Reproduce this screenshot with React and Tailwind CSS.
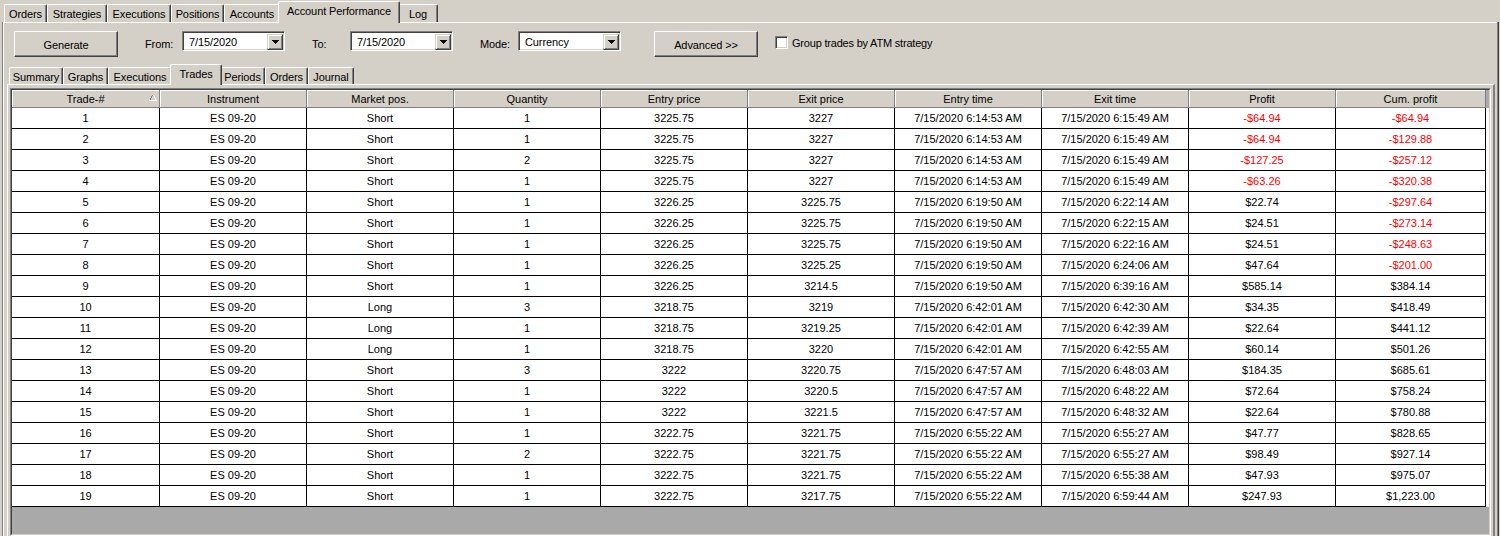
import React from "react";

const rows = [
  [1, "Short", 1, "3225.75", "3227", "7/15/2020 6:14:53 AM", "7/15/2020 6:15:49 AM", "-$64.94", "-$64.94"],
  [2, "Short", 1, "3225.75", "3227", "7/15/2020 6:14:53 AM", "7/15/2020 6:15:49 AM", "-$64.94", "-$129.88"],
  [3, "Short", 2, "3225.75", "3227", "7/15/2020 6:14:53 AM", "7/15/2020 6:15:49 AM", "-$127.25", "-$257.12"],
  [4, "Short", 1, "3225.75", "3227", "7/15/2020 6:14:53 AM", "7/15/2020 6:15:49 AM", "-$63.26", "-$320.38"],
  [5, "Short", 1, "3226.25", "3225.75", "7/15/2020 6:19:50 AM", "7/15/2020 6:22:14 AM", "$22.74", "-$297.64"],
  [6, "Short", 1, "3226.25", "3225.75", "7/15/2020 6:19:50 AM", "7/15/2020 6:22:15 AM", "$24.51", "-$273.14"],
  [7, "Short", 1, "3226.25", "3225.75", "7/15/2020 6:19:50 AM", "7/15/2020 6:22:16 AM", "$24.51", "-$248.63"],
  [8, "Short", 1, "3226.25", "3225.25", "7/15/2020 6:19:50 AM", "7/15/2020 6:24:06 AM", "$47.64", "-$201.00"],
  [9, "Short", 1, "3226.25", "3214.5", "7/15/2020 6:19:50 AM", "7/15/2020 6:39:16 AM", "$585.14", "$384.14"],
  [10, "Long", 3, "3218.75", "3219", "7/15/2020 6:42:01 AM", "7/15/2020 6:42:30 AM", "$34.35", "$418.49"],
  [11, "Long", 1, "3218.75", "3219.25", "7/15/2020 6:42:01 AM", "7/15/2020 6:42:39 AM", "$22.64", "$441.12"],
  [12, "Long", 1, "3218.75", "3220", "7/15/2020 6:42:01 AM", "7/15/2020 6:42:55 AM", "$60.14", "$501.26"],
  [13, "Short", 3, "3222", "3220.75", "7/15/2020 6:47:57 AM", "7/15/2020 6:48:03 AM", "$184.35", "$685.61"],
  [14, "Short", 1, "3222", "3220.5", "7/15/2020 6:47:57 AM", "7/15/2020 6:48:22 AM", "$72.64", "$758.24"],
  [15, "Short", 1, "3222", "3221.5", "7/15/2020 6:47:57 AM", "7/15/2020 6:48:32 AM", "$22.64", "$780.88"],
  [16, "Short", 1, "3222.75", "3221.75", "7/15/2020 6:55:22 AM", "7/15/2020 6:55:27 AM", "$47.77", "$828.65"],
  [17, "Short", 2, "3222.75", "3221.75", "7/15/2020 6:55:22 AM", "7/15/2020 6:55:27 AM", "$98.49", "$927.14"],
  [18, "Short", 1, "3222.75", "3221.75", "7/15/2020 6:55:22 AM", "7/15/2020 6:55:38 AM", "$47.93", "$975.07"],
  [19, "Short", 1, "3222.75", "3217.75", "7/15/2020 6:55:22 AM", "7/15/2020 6:59:44 AM", "$247.93", "$1,223.00"],
];

const headers = [
  "Trade-#",
  "Instrument",
  "Market pos.",
  "Quantity",
  "Entry price",
  "Exit price",
  "Entry time",
  "Exit time",
  "Profit",
  "Cum. profit",
];

const topTabs = [
  { label: "Orders", w: "w-[43px]" },
  { label: "Strategies", w: "w-[60px]" },
  { label: "Executions", w: "w-[64px]" },
  { label: "Positions", w: "w-[53px]" },
  { label: "Accounts", w: "w-[56px]" },
  { label: "Account Performance", w: "w-[122px]", sel: true },
  { label: "Log", w: "w-[40px]" },
];

const subTabs = [
  { label: "Summary", w: "w-[54px]" },
  { label: "Graphs", w: "w-[45px]" },
  { label: "Executions", w: "w-[64px]" },
  { label: "Trades", w: "w-[52px]", sel: true },
  { label: "Periods", w: "w-[45px]" },
  { label: "Orders", w: "w-[43px]" },
  { label: "Journal", w: "w-[46px]" },
];

function Tab({ label, w, sel, small }) {
  if (sel) {
    return (
      <div
        className={`${w} ${small ? "h-[21px]" : "h-[22px]"} -mx-[2px] -mb-px relative z-10 bg-[#d4d0c8] border-l border-t border-r border-l-white border-t-white border-r-[#404040] rounded-tl-[2px] rounded-tr-[2px] shadow-[inset_-1px_0_0_#808080] flex justify-center pt-[3px] leading-[13px] whitespace-nowrap tracking-[-0.1px]`}
      >
        {label}
      </div>
    );
  }
  return (
    <div
      className={`${w} ${small ? "h-[17px]" : "h-[18px]"} bg-[#d4d0c8] border-l border-t border-r border-l-white border-t-white border-r-[#404040] rounded-tl-[2px] rounded-tr-[2px] shadow-[inset_-1px_0_0_#808080] flex justify-center pt-[3px] leading-[13px] whitespace-nowrap tracking-[-0.1px]`}
    >
      {label}
    </div>
  );
}

function Button({ children }) {
  return (
    <div className="w-[104px] h-[26px] shrink-0 bg-[#d4d0c8] border border-t-white border-l-white border-r-[#404040] border-b-[#404040] shadow-[inset_-1px_-1px_0_#808080] flex items-center justify-center pt-[3px]">
      {children}
    </div>
  );
}

function Arrow() {
  return (
    <svg width="7" height="4" viewBox="0 0 7 4" shapeRendering="crispEdges">
      <rect x="0" y="0" width="7" height="1" fill="#000" />
      <rect x="1" y="1" width="5" height="1" fill="#000" />
      <rect x="2" y="2" width="3" height="1" fill="#000" />
      <rect x="3" y="3" width="1" height="1" fill="#000" />
    </svg>
  );
}

function Combo({ value }) {
  return (
    <div className="w-[103px] h-[20px] shrink-0 bg-white border border-t-[#808080] border-l-[#808080] border-r-white border-b-white shadow-[inset_1px_1px_0_#404040,inset_-1px_-1px_0_#d4d0c8] p-px flex items-stretch">
      <div className="flex-1 pl-[4px] pt-[2px] leading-[13px] ml-px mt-px">{value}</div>
      <div className="w-[16px] h-[16px] mt-px bg-[#d4d0c8] border border-t-[#d4d0c8] border-l-[#d4d0c8] border-r-[#404040] border-b-[#404040] shadow-[inset_1px_1px_0_#fff,inset_-1px_-1px_0_#808080] flex items-center justify-center">
        <Arrow />
      </div>
    </div>
  );
}

function Label({ children, w }) {
  return <div className={`${w} shrink-0 h-[20px] mt-[3px] leading-[20px] whitespace-nowrap`}>{children}</div>;
}

function SortGlyph() {
  return (
    <svg width="8" height="6" viewBox="0 0 8 6" shapeRendering="crispEdges" className="absolute right-[2px] top-[5px]">
      <rect x="3" y="0" width="1" height="1" fill="#808080" />
      <rect x="4" y="0" width="1" height="1" fill="#ffffff" />
      <rect x="2" y="1" width="1" height="2" fill="#808080" />
      <rect x="5" y="1" width="1" height="2" fill="#ffffff" />
      <rect x="1" y="3" width="1" height="2" fill="#808080" />
      <rect x="6" y="3" width="1" height="2" fill="#ffffff" />
      <rect x="0" y="5" width="8" height="1" fill="#ffffff" />
    </svg>
  );
}

const gridCols = "grid grid-cols-[148px_repeat(8,147px)_150px]";

export default function App() {
  return (
    <div className="w-[1500px] h-[536px] overflow-hidden bg-[#d4d0c8] text-black text-[11px] font-['Liberation_Sans',Arial,sans-serif] flex flex-col select-none">
      {/* top tabs */}
      <div className="h-[22px] shrink-0 flex items-end pl-[4px]">
        {topTabs.map((t) => (
          <Tab key={t.label} {...t} />
        ))}
      </div>

      {/* outer pane */}
      <div className="flex-1 min-h-0 ml-[2px] border-l border-[#808080] flex">
        <div className="flex-1 min-w-0 w-[1494px] border-l border-t border-l-white border-t-white flex flex-col">
          {/* toolbar */}
          <div className="h-[41px] shrink-0 flex items-start pt-[8px] pl-[10px] tracking-[-0.1px]">
            <Button>Generate</Button>
            <div className="ml-[27px]">
              <Label w="w-[37px]">From:</Label>
            </div>
            <Combo value="7/15/2020" />
            <div className="ml-[27px]">
              <Label w="w-[38px]">To:</Label>
            </div>
            <Combo value="7/15/2020" />
            <div className="ml-[27px]">
              <Label w="w-[38px]">Mode:</Label>
            </div>
            <Combo value="Currency" />
            <div className="ml-[33px]">
              <Button>Advanced &gt;&gt;</Button>
            </div>
            <div className="ml-[17px] mt-[5px] w-[13px] h-[13px] shrink-0 bg-white border border-t-[#808080] border-l-[#808080] border-r-white border-b-white shadow-[inset_1px_1px_0_#404040,inset_-1px_-1px_0_#d4d0c8]" />
            <div className="ml-[4px] h-[20px] mt-[2px] leading-[20px] whitespace-nowrap tracking-[-0.2px]">Group trades by ATM strategy</div>
          </div>

          {/* inner tab control */}
          <div className="flex-1 min-h-0 ml-[3px] mr-[2px] flex flex-col">
            <div className="h-[20px] shrink-0 flex items-end pl-[2px]">
              {subTabs.map((t) => (
                <Tab key={t.label} {...t} small />
              ))}
            </div>
            <div className="flex-1 min-h-0 border-l border-t border-r-2 border-l-white border-t-white border-r-[#808080] flex flex-col">
              {/* grid */}
              <div className="flex-1 min-h-0 mt-[3px] ml-[2px] mr-[2px] border border-t-[#808080] border-l-[#808080] border-r-white border-b-white">
                <div className="h-full bg-[#a9a9a9] border border-t-[#404040] border-l-[#404040] border-r-[#d4d0c8] border-b-[#d4d0c8] overflow-hidden">
                  {/* header */}
                  <div className={`${gridCols} h-[18px]`}>
                    {headers.map((h, i) => (
                      <div
                        key={h}
                        className="relative bg-[#d4d0c8] border-r border-b border-[#808080] shadow-[inset_1px_1px_0_#fff] flex items-center justify-center pt-[2px] leading-[13px] whitespace-nowrap"
                      >
                        {h}
                        {i === 0 && <SortGlyph />}
                      </div>
                    ))}
                  </div>
                  {/* rows */}
                  {rows.map((r) => {
                    const cells = [String(r[0]), "ES 09-20", r[1], String(r[2]), r[3], r[4], r[5], r[6], r[7], r[8]];
                    return (
                      <div key={r[0]} className={`${gridCols} h-[21px] bg-white`}>
                        {cells.map((c, i) => (
                          <div
                            key={i}
                            className={`border-r border-b border-black flex items-center justify-center pt-px leading-[13px] whitespace-nowrap ${
                              i >= 8 && c.startsWith("-") ? "text-[#ff0000]" : ""
                            }`}
                          >
                            {c}
                          </div>
                        ))}
                      </div>
                    );
                  })}
                </div>
              </div>
            </div>
          </div>
        </div>
        <div className="w-[3px] shrink-0 flex">
          <div className="w-px bg-[#808080]" />
          <div className="w-px bg-[#404040]" />
        </div>
      </div>
    </div>
  );
}
